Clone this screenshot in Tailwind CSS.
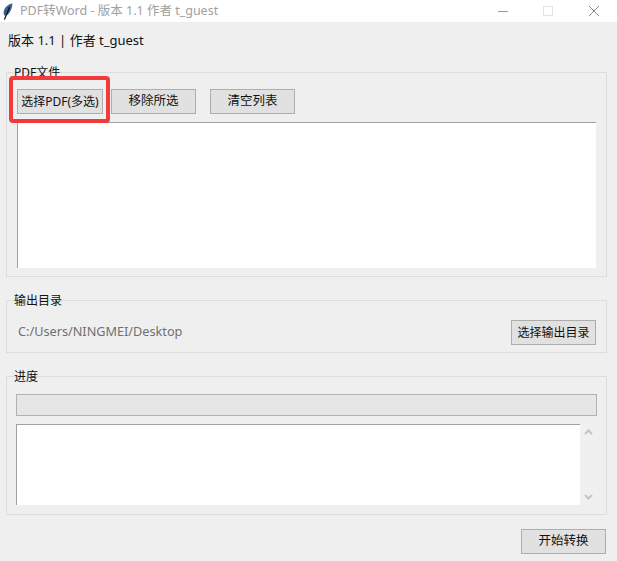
<!DOCTYPE html>
<html lang="zh-CN">
<head>
    <meta charset="UTF-8">
    <title>PDF转Word</title>
    <script src="https://cdn.jsdelivr.net/npm/@tailwindcss/browser@4"></script>
</head>
<body class="bg-[#efefef] font-['Noto_Sans','Noto_Sans_CJK_SC',sans-serif] text-[12px] text-[#111111] overflow-hidden">
<div class="relative w-[617px] h-[561px] overflow-hidden">
    <!-- title bar -->
    <div class="flex items-center h-[22px] bg-white">
        <svg class="ml-[2px] w-[11px] h-[17px]" viewBox="0 0 11 17">
            <path d="M10.5 0.5 C6.5 1 2.8 4 1.8 8 C1.4 9.8 1.6 11.2 2.4 12.6 C3.4 13 4.8 12.6 6 11.6 C8.4 9.4 10 5.4 10.5 0.5 Z" fill="#3d5f8a"/>
            <path d="M7.6 4 L2.4 16.5" stroke="#111" stroke-width="1.2" fill="none"/>
        </svg>
        <span class="ml-[7px] text-[12.5px] text-[#a0a0a0]">PDF转Word - 版本 1.1 作者 t_guest</span>
        <div class="ml-auto flex items-center">
            <div class="w-[10px] h-px bg-[#9a9a9a]"></div>
            <div class="ml-[35px] w-[10px] h-[10px] border border-[#e2e2e2]"></div>
            <svg class="ml-[36px] mr-[18px] w-[10px] h-[10px]" viewBox="0 0 10 10">
                <path d="M0 0 L10 10 M10 0 L0 10" stroke="#8a8a8a" stroke-width="1" fill="none"/>
            </svg>
        </div>
    </div>

    <div class="pl-[6px] pr-[10px]">
        <div class="pl-[2px] h-[37px] flex items-center text-[13px] text-[#111111]">版本 1.1 | 作者 t_guest</div>

        <!-- PDF files -->
        <div class="relative mt-[13px] h-[205px] border border-[#dcdcdc] pt-[16px] pl-[10px] pr-[10px]">
            <span class="absolute left-[7px] top-[-9px] leading-[18px]">PDF文件</span>
            <div class="flex">
                <button class="w-[86px] h-[25px] bg-[#e1e1e1] border border-[#adadad] whitespace-nowrap">选择PDF(多选)</button>
                <button class="ml-[8px] w-[85px] h-[25px] bg-[#e1e1e1] border border-[#adadad] text-[12.5px]">移除所选</button>
                <button class="ml-[14px] w-[85px] h-[25px] bg-[#e1e1e1] border border-[#adadad] text-[12.5px]">清空列表</button>
            </div>
            <div class="mt-[8px] h-[146px] bg-white border-t border-l border-[#a0a0a0]"></div>
        </div>

        <!-- output dir -->
        <div class="relative mt-[23px] h-[53px] border border-[#dcdcdc] pl-[11px] pr-[10px] flex items-center justify-between">
            <span class="absolute left-[7px] top-[-9px] leading-[18px]">输出目录</span>
            <span class="mt-[10px] text-[12.7px] text-[#6f6f6f]">C:/Users/NINGMEI/Desktop</span>
            <button class="mt-[12px] w-[85px] h-[25px] bg-[#e1e1e1] border border-[#adadad] whitespace-nowrap">选择输出目录</button>
        </div>

        <!-- progress -->
        <div class="relative mt-[23px] h-[139px] border border-[#dcdcdc] pt-[17px] pl-[9px] pr-[9px]">
            <span class="absolute left-[7px] top-[-9px] leading-[18px]">进度</span>
            <div class="h-[22px] bg-[#e6e6e6] border border-[#b2b2b2]"></div>
            <div class="mt-[8px] flex h-[81px]">
                <div class="flex-1 bg-white border-t border-l border-[#a0a0a0]"></div>
                <div class="w-[17px] flex flex-col items-center justify-between py-[5px] bg-[#f0f0f0]">
                    <svg class="w-[9px] h-[6px]" viewBox="0 0 9 6"><path d="M1 5 L4.5 1.5 L8 5" stroke="#c4c4c4" stroke-width="2" fill="none"/></svg>
                    <svg class="w-[9px] h-[6px]" viewBox="0 0 9 6"><path d="M1 1 L4.5 4.5 L8 1" stroke="#c4c4c4" stroke-width="2" fill="none"/></svg>
                </div>
            </div>
        </div>

        <div class="mt-[14px] flex justify-end -mr-[9px]">
            <button class="mr-[10px] w-[85px] h-[25px] bg-[#e1e1e1] border border-[#adadad] text-[12.5px]">开始转换</button>
        </div>
    </div>

    <!-- red annotation round the first button -->
    <div class="absolute left-[9px] top-[76px] w-[101px] h-[47px] border-4 border-[#f23a3a] rounded-[4px]"></div>
</div>
</body>
</html>
